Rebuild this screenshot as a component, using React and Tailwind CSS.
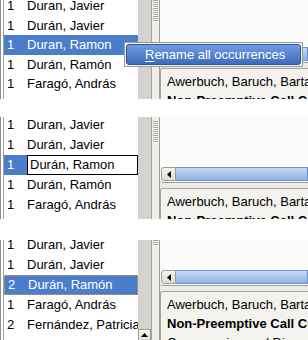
const SEL = "bg-[#4b7dcb] text-white";

const panels = [
  {
    h: 99,
    rowH: "h-[19.5px]",
    offset: "-mt-[4px]",
    rows: [
      ["1", "Duran, Javier"],
      ["1", "Durán, Javier"],
      ["1", "Duran, Ramon", "sel"],
      ["1", "Durán, Ramón"],
      ["1", "Faragó, András"],
    ],
    white: "h-[47px]",
    grip: "h-[22px]",
  },
  {
    h: 102,
    rowH: "h-[20px]",
    offset: "-mt-[2px]",
    rows: [
      ["1", "Duran, Javier"],
      ["1", "Durán, Javier"],
      ["1", "Durán, Ramon", "edit"],
      ["1", "Durán, Ramón"],
      ["1", "Faragó, András"],
    ],
    white: "h-[50px]",
    grip: "h-[22px]",
    gripTop: "mt-[4px]",
  },
  {
    h: 100,
    rowH: "h-[20px]",
    offset: "-mt-[5px]",
    rows: [
      ["1", "Duran, Javier"],
      ["1", "Durán, Javier"],
      ["2", "Durán, Ramón", "focus"],
      ["1", "Faragó, András"],
      ["2", "Fernández, Patricia"],
    ],
    white: "h-[30px]",
    grip: "h-[6px]",
    upArrow: true,
  },
];

const Row = ({ num, name, mode, rowH }) => {
  if (mode === "edit") {
    return (
      <div className={`flex ${rowH}`}>
        <div className={`w-[23px] shrink-0 pl-[3px] flex items-center ${SEL}`}>{num}</div>
        <div className="flex-1 border border-black bg-white flex items-center pl-[2px] whitespace-nowrap overflow-hidden">
          {name}
        </div>
      </div>
    );
  }
  const cls =
    mode === "sel"
      ? SEL
      : mode === "focus"
      ? `${SEL} border border-dotted border-[#c9a55a]`
      : "text-black";
  return (
    <div className={`flex items-center whitespace-nowrap ${rowH} ${cls}`}>
      <div className="w-[23px] shrink-0 pl-[3px]">{num}</div>
      <div>{name}</div>
    </div>
  );
};

const HScroll = () => (
  <div className="h-[15px] flex pl-[1px] pb-[1px]">
    <div className="w-[15px] h-full border border-[#9b9a95] rounded-l-[3px] bg-gradient-to-b from-[#f6f5f3] to-[#dcdbd6] flex items-center justify-center">
      <svg width="4" height="7" viewBox="0 0 4 7">
        <path d="M4 0 L0 3.5 L4 7 Z" fill="#000" />
      </svg>
    </div>
    <div className="flex-1 h-full border border-[#6f92c9] border-l-0 bg-gradient-to-b from-[#c4d7f2] to-[#93b4e4]" />
  </div>
);

const Panel = ({ p }) => (
  <div className="flex bg-[#edece9] overflow-hidden" style={{ height: p.h }}>
    {/* list */}
    <div className="w-[138px] shrink-0 flex border-l border-[#8e8e8a] pl-[2px] bg-white">
      <div className="flex-1 border-l border-[#a0a09c] bg-white overflow-hidden">
        <div className={p.offset}>
          {p.rows.map(([n, name, mode], i) => (
            <Row key={i} num={n} name={name} mode={mode} rowH={p.rowH} />
          ))}
        </div>
      </div>
    </div>

    {/* vertical scrollbar trough */}
    <div className="w-[14px] shrink-0 bg-[#d3d2cd] border-r border-[#a5a49f] flex flex-col justify-end">
      {p.upArrow && (
        <div className="h-[11px] border border-b-0 border-[#9b9a95] bg-gradient-to-b from-[#f6f5f3] to-[#e2e1dc] flex justify-center pt-[3px]">
          <svg width="7" height="4" viewBox="0 0 7 4">
            <path d="M0 4 L3.5 0 L7 4 Z" fill="#000" />
          </svg>
        </div>
      )}
    </div>

    {/* pane handle */}
    <div className="w-[8px] shrink-0 bg-[#efeeeb] border-r border-[#9d9c97] flex justify-center">
      <div
        className={`w-[5px] ${p.grip} ${p.gripTop || ""} [background-image:repeating-linear-gradient(to_bottom,#a3a29e_0,#a3a29e_1px,#ffffff_1px,#ffffff_2px)]`}
      />
    </div>

    {/* right side */}
    <div className="flex-1 flex flex-col min-w-0">
      <div className="border-b border-[#9d9c97] rounded-bl-[3px] bg-[#fbfbfa]">
        <div className={`${p.white} bg-[#fbfbfa]`} />
        <HScroll />
      </div>
      <div className="mt-[5px] ml-[0px] flex-1 border-t border-l border-[#a3a29d] rounded-tl-[3px] bg-[#f3f2ef] pl-[6px] pt-[3px] leading-[19px] whitespace-nowrap overflow-hidden text-black">
        <div>Awerbuch, Baruch, Bartal, Yair</div>
        <div className="font-bold">Non-Preemptive Call Control</div>
        <div>Compression and Dissemination</div>
      </div>
    </div>
  </div>
);

export default function App() {
  return (
    <div
      className="w-[308px] h-[340px] bg-white overflow-hidden relative text-[13px]"
      style={{ fontFamily: '"Liberation Sans", Arial, sans-serif' }}
    >
      <Panel p={panels[0]} />
      <div className="h-[18px]" />
      <Panel p={panels[1]} />
      <div className="h-[21px]" />
      <Panel p={panels[2]} />

      {/* context menu over first panel */}
      <div className="absolute left-[124px] top-[42px] w-[179px] h-[25px] bg-[#f2f1ef] border border-[#9d9c98] p-[1px]">
        <div className="h-full rounded-[3px] border border-[#2d5598] bg-gradient-to-b from-[#719de3] to-[#3c6bbb] text-white flex items-center pl-[18px] whitespace-nowrap">
          <span className="underline underline-offset-2">R</span>ename all occurrences
        </div>
      </div>
    </div>
  );
}
